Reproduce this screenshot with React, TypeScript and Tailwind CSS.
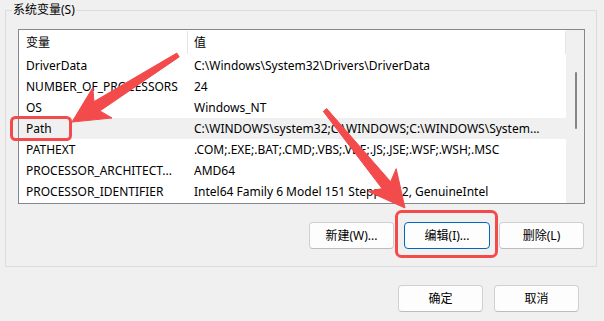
import React from "react";

const rows: [string, string][] = [
  ["DriverData", "C:\\Windows\\System32\\Drivers\\DriverData"],
  ["NUMBER_OF_PROCESSORS", "24"],
  ["OS", "Windows_NT"],
  ["Path", "C:\\WINDOWS\\system32;C:\\WINDOWS;C:\\WINDOWS\\System..."],
  ["PATHEXT", ".COM;.EXE;.BAT;.CMD;.VBS;.VBE;.JS;.JSE;.WSF;.WSH;.MSC"],
  ["PROCESSOR_ARCHITECT...", "AMD64"],
  ["PROCESSOR_IDENTIFIER", "Intel64 Family 6 Model 151 Stepping 2, GenuineIntel"],
];

function arrowPoints(tx: number, ty: number, px: number, py: number, L = 36, W = 18, w1 = 5.5, w0 = 2.2): string {
  const dx = px - tx;
  const dy = py - ty;
  const len = Math.hypot(dx, dy);
  const ux = dx / len;
  const uy = dy / len;
  const nx = -uy;
  const ny = ux;
  const bx = px - ux * L;
  const by = py - uy * L;
  const kx = px - ux * L * 0.82;
  const ky = py - uy * L * 0.82;
  const pts = [
    [tx + nx * w0, ty + ny * w0],
    [kx + nx * w1, ky + ny * w1],
    [bx + nx * W, by + ny * W],
    [px, py],
    [bx - nx * W, by - ny * W],
    [kx - nx * w1, ky - ny * w1],
    [tx - nx * w0, ty - ny * w0],
  ];
  return pts.map((p) => `${p[0].toFixed(1)},${p[1].toFixed(1)}`).join(" ");
}

function Btn({ children, w, focused }: { children: React.ReactNode; w: string; focused?: boolean }) {
  return (
    <div
      className={
        "h-[27px] rounded-[4px] border flex items-center justify-center bg-[#fdfdfd] " +
        w +
        (focused ? " border-[#0067c0]" : " border-[#d0d0d0] border-b-[#bcbcbc]")
      }
    >
      {children}
    </div>
  );
}

export default function App() {
  const red = "#f34b4b";
  return (
    <div className="relative w-[604px] h-[321px] overflow-hidden bg-[#f0f0f0] text-[12px] text-black font-['Noto_Sans','Noto_Sans_CJK_SC',sans-serif]">
      <div className="pl-[5px] pt-[10px]">
        <div className="relative w-[592px] h-[257px] border border-[#dcdcdc] pl-[12px] pt-[18px]">
          <span className="absolute left-[6px] top-[-9px] px-[1px] bg-[#f0f0f0] leading-[16px]">系统变量(S)</span>
          <div className="w-[567px] h-[175px] border border-[#828790] bg-white flex">
            <div className="flex-1 min-w-0 flex flex-col">
              <div className="h-[25px] flex items-stretch shrink-0">
                <div className="w-[168px] pl-[7px] flex items-center leading-none">变量</div>
                <div className="w-px my-[1px] bg-[#e5e5e5]" />
                <div className="flex-1 pl-[6px] flex items-center leading-none">值</div>
                <div className="w-px my-[1px] bg-[#e5e5e5]" />
              </div>
              {rows.map(([k, v]) => (
                <div key={k} className={"h-[21px] flex items-center shrink-0 " + (k === "Path" ? "bg-[#f0f0f0]" : "")}>
                  <div className="w-[169px] pl-[7px] whitespace-nowrap overflow-hidden leading-[21px]">{k}</div>
                  <div className="flex-1 min-w-0 pl-[6px] whitespace-nowrap overflow-hidden leading-[21px]">{v}</div>
                </div>
              ))}
            </div>
            <div className="w-[18px] bg-[#f0f0f0] flex justify-center">
              <div className="mt-[42px] ml-[1px] w-[2px] h-[57px] rounded-full bg-[#858585]" />
            </div>
          </div>
          <div className="w-[567px] mt-[18px] flex justify-end pr-[1px]">
            <Btn w="w-[85px]">新建(W)...</Btn>
            <div className="w-[10px]" />
            <Btn w="w-[86px]" focused>编辑(I)...</Btn>
            <div className="w-[9px]" />
            <Btn w="w-[85px]">删除(L)</Btn>
          </div>
        </div>
      </div>
      <div className="mt-[18px] flex justify-end pr-[25px] gap-[11px]">
        <Btn w="w-[85px]">确定</Btn>
        <Btn w="w-[85px]">取消</Btn>
      </div>
      <svg className="absolute left-0 top-0 pointer-events-none" width="604" height="321" viewBox="0 0 604 321">
        <rect x="11.5" y="117.5" width="59" height="22" rx="4" fill="none" stroke={red} strokeWidth="3" />
        <rect x="396.5" y="211.5" width="100" height="45" rx="5" fill="none" stroke={red} strokeWidth="3" />
        <polygon points={arrowPoints(178, 55, 72, 122)} fill={red} strokeLinejoin="round" stroke={red} strokeWidth="1" />
        <polygon points={arrowPoints(325, 110, 405, 208)} fill={red} strokeLinejoin="round" stroke={red} strokeWidth="1" />
      </svg>
    </div>
  );
}
